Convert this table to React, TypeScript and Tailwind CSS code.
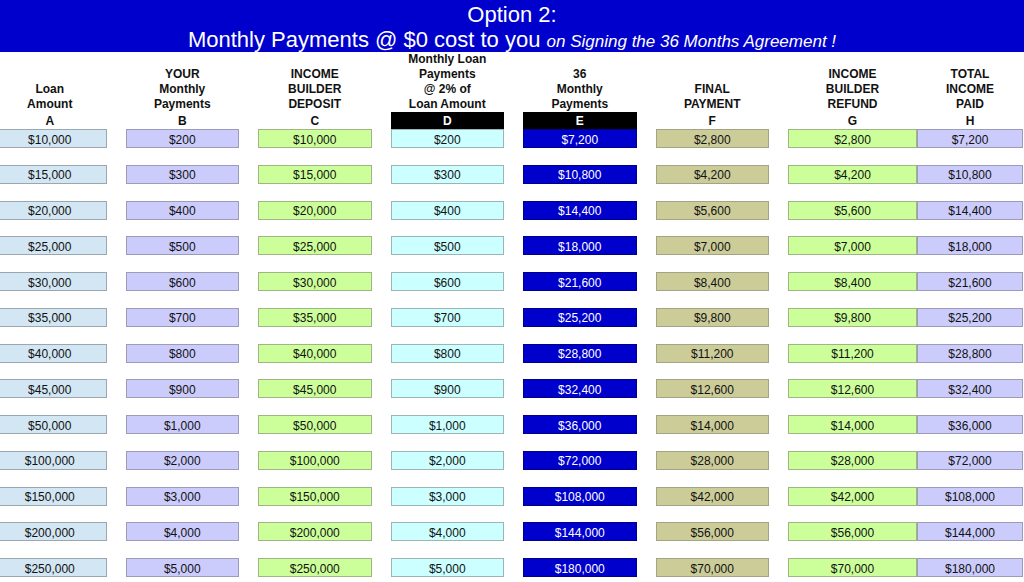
import React from "react";

type Col = {
  key: string;
  label: string[];
  bg: string;
  text: string;
  border: string;
  dark?: boolean;
};

const cols: Col[] = [
  { key: "A", label: ["Loan", "Amount"], bg: "bg-[#d3e6f3]", text: "text-[#111]", border: "border-[#9aa6b0]" },
  { key: "B", label: ["YOUR", "Monthly", "Payments"], bg: "bg-[#ccccfc]", text: "text-[#111]", border: "border-[#9c9cb8]" },
  { key: "C", label: ["INCOME", "BUILDER", "DEPOSIT"], bg: "bg-[#ccff99]", text: "text-[#111]", border: "border-[#9fb584]" },
  { key: "D", label: ["Monthly Loan", "Payments", "@ 2% of", "Loan Amount"], bg: "bg-[#ccffff]", text: "text-[#111]", border: "border-[#9cb4b4]", dark: true },
  { key: "E", label: ["36", "Monthly", "Payments"], bg: "bg-[#0000cc]", text: "text-white", border: "border-[#00008a]", dark: true },
  { key: "F", label: ["FINAL", "PAYMENT"], bg: "bg-[#cccc99]", text: "text-[#111]", border: "border-[#a3a386]" },
  { key: "G", label: ["INCOME", "BUILDER", "REFUND"], bg: "bg-[#ccff99]", text: "text-[#111]", border: "border-[#9fb584]" },
  { key: "H", label: ["TOTAL", "INCOME", "PAID"], bg: "bg-[#ccccfc]", text: "text-[#111]", border: "border-[#9c9cb8]" },
];

const loans = [10000, 15000, 20000, 25000, 30000, 35000, 40000, 45000, 50000, 100000, 150000, 200000, 250000];

const fmt = (n: number) => "$" + n.toLocaleString("en-US");

function rowValues(loan: number) {
  const monthly = loan * 0.02;
  const total = monthly * 36;
  const final = loan * 0.28;
  return [loan, monthly, loan, monthly, total, final, final, total];
}

// widths of each column; G and H touch each other
const widths = ["w-[113.5px]", "w-[113.5px]", "w-[113.5px]", "w-[113.5px]", "w-[113.5px]", "w-[113.5px]", "w-[129px]", "w-[106px]"];

function Row({ children }: { children: React.ReactNode[] }) {
  return (
    <div className="ml-[-7px] flex gap-[19px]">
      {children.slice(0, 6)}
      <div className="flex">{children.slice(6)}</div>
    </div>
  );
}

export default function App() {
  return (
    <div
      className="w-[1024px] h-[582px] overflow-hidden bg-white"
      style={{ fontFamily: '"Liberation Sans", Arial, sans-serif' }}
    >
      <header className="h-[52px] bg-[#0000cc] text-white flex flex-col items-center pt-[2px]">
        <div className="text-[22px] leading-[25px]">Option 2:</div>
        <div className="text-[22px] leading-[25px] whitespace-nowrap">
          Monthly Payments @ $0 cost to you{" "}
          <span className="italic text-[17px]">on Signing the 36 Months Agreement !</span>
        </div>
      </header>

      <Row>
        {cols.map((c, i) => (
          <div key={c.key} className={`${widths[i]} h-[60px] flex flex-col justify-end items-center text-[12px] leading-[15px] font-bold text-[#111]`}>
            {c.label.map((l) => (
              <div key={l} className="whitespace-nowrap">{l}</div>
            ))}
          </div>
        ))}
      </Row>

      <Row>
        {cols.map((c, i) => (
          <div
            key={c.key}
            className={`${widths[i]} h-[17px] flex items-center justify-center pt-[1px] text-[12px] font-bold ${
              c.dark ? "bg-black text-white" : "text-[#111]"
            }`}
          >
            {c.key}
          </div>
        ))}
      </Row>

      <div className="flex flex-col gap-[16.75px]">
        {loans.map((loan) => {
          const vals = rowValues(loan);
          return (
            <Row key={loan}>
              {cols.map((c, i) => (
                <div
                  key={c.key}
                  className={`${widths[i]} h-[19px] flex items-center justify-center pt-[2px] border ${c.bg} ${c.text} ${c.border} text-[12px]`}
                >
                  {fmt(vals[i])}
                </div>
              ))}
            </Row>
          );
        })}
      </div>
    </div>
  );
}
